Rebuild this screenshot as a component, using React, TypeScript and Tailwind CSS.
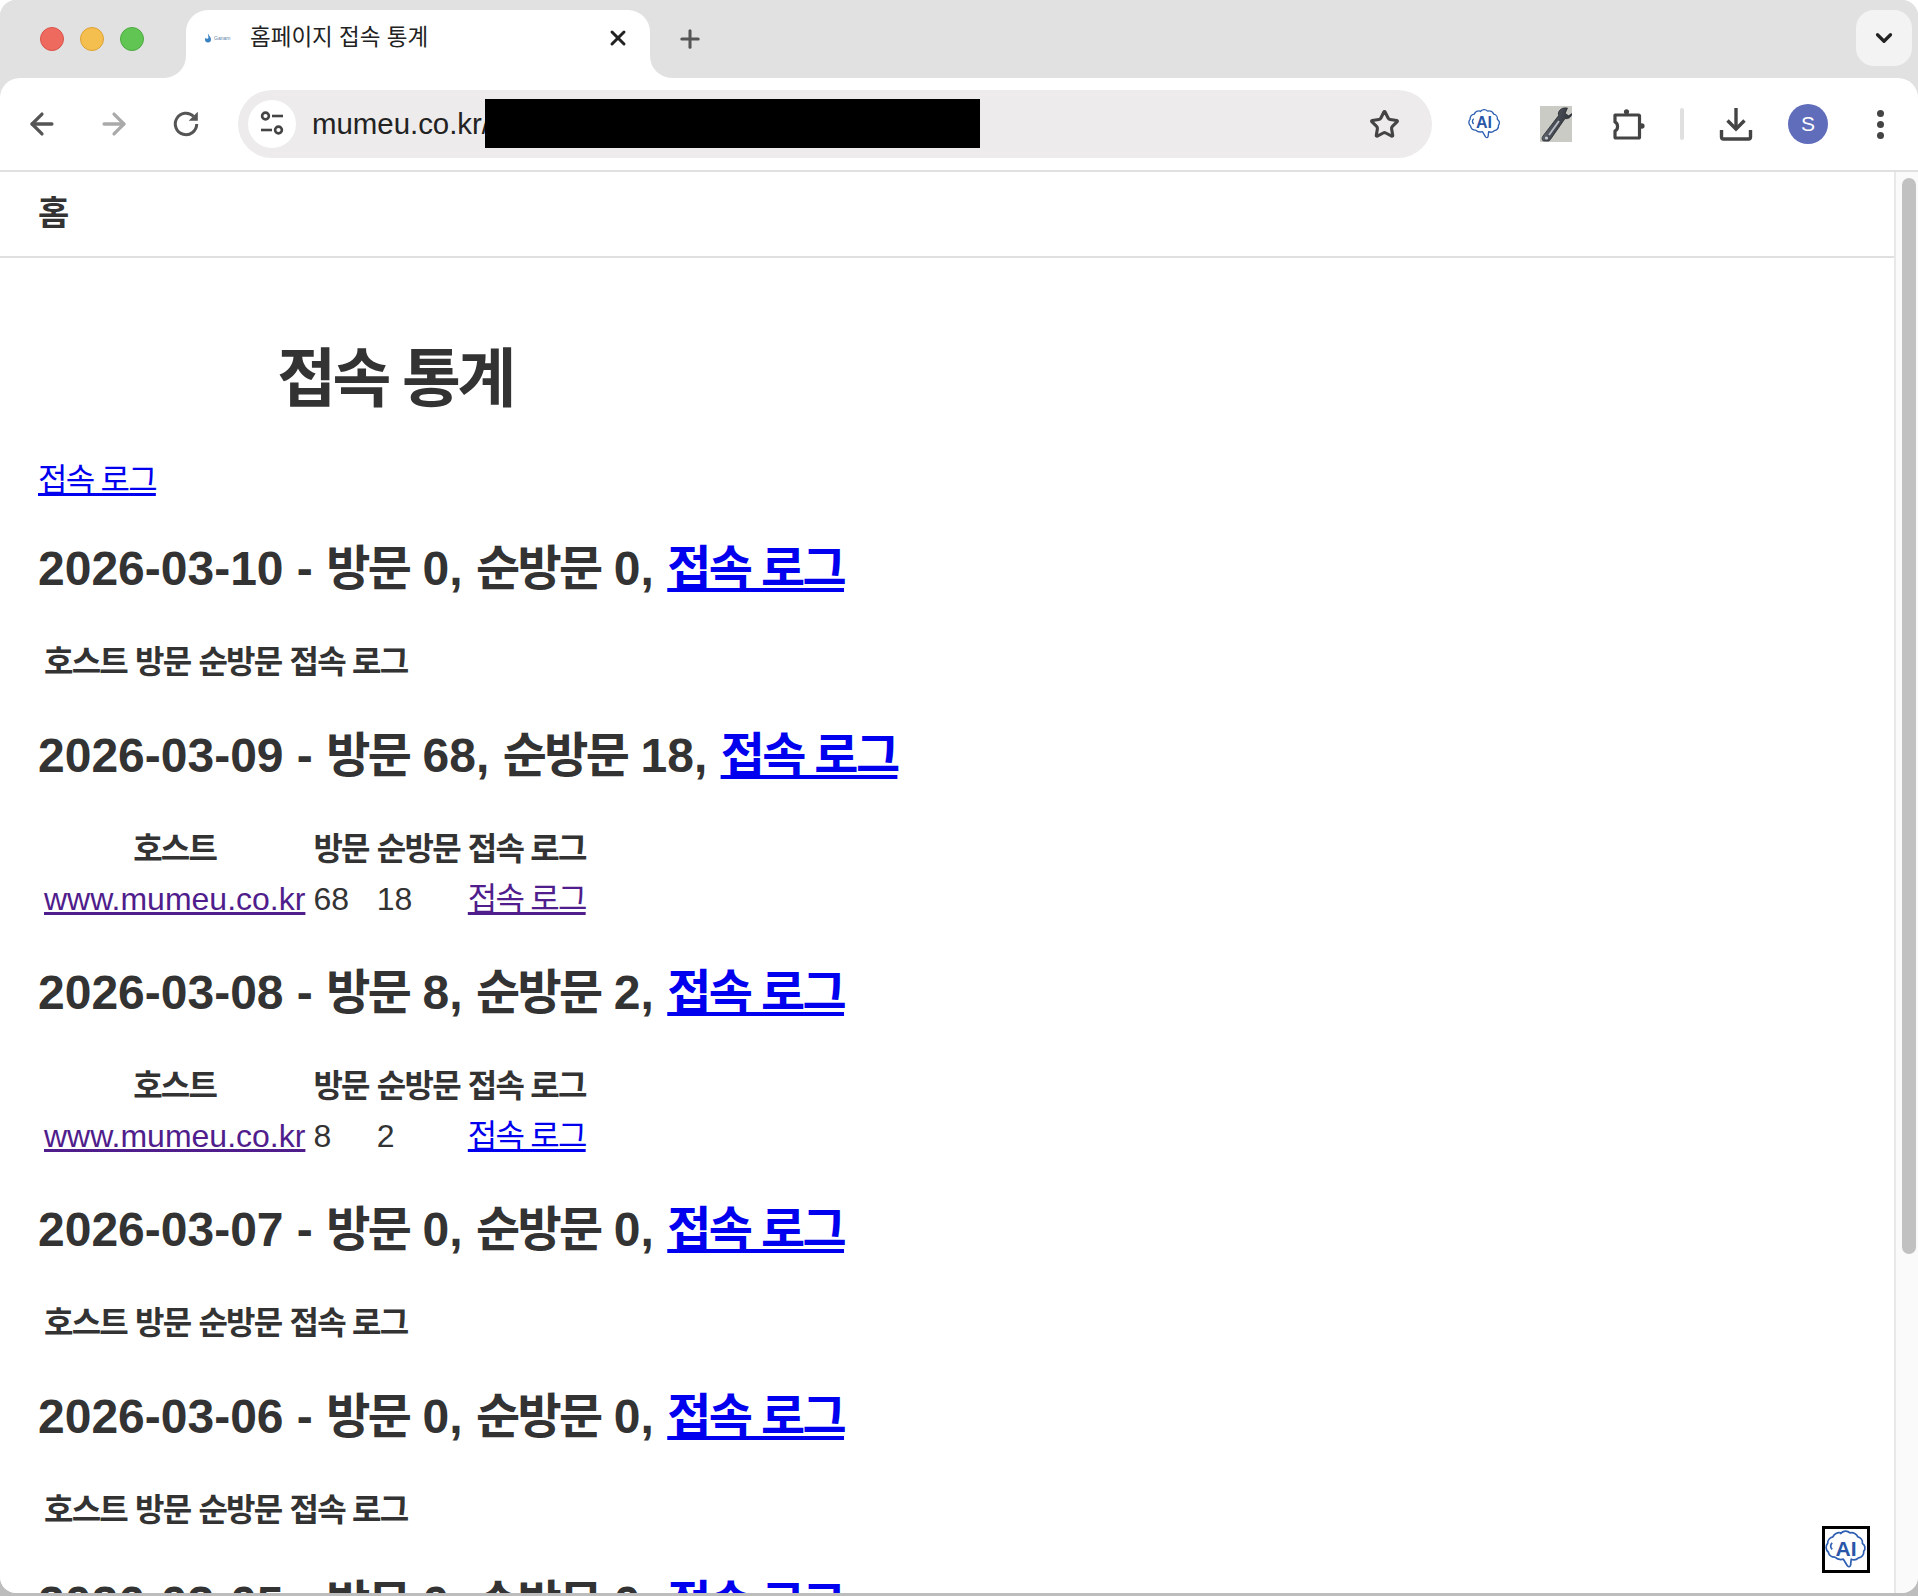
import React from 'react';
import { ArrowLeft, ArrowRight, Star, X, Plus, ChevronDown } from 'lucide-react';

const Ko: React.FC<{ children: React.ReactNode }> = ({ children }) => (
  <span className="tracking-[-0.055em]">{children}</span>
);

const BrainIcon: React.FC<{ size: number; textClass: string }> = ({ size, textClass }) => (
  <div className="relative flex items-center justify-center" style={{ width: size, height: size }}>
    <svg viewBox="0 0 32 32" className="absolute inset-0 w-full h-full" fill="none" stroke="#2f5fb3" strokeWidth="1.3" strokeLinejoin="round">
      <path d="M12 3.5a4.5 4.5 0 0 1 7-.5 5 5 0 0 1 6 3 4.5 4.5 0 0 1 3.5 5 4 4 0 0 1 1 6 4.5 4.5 0 0 1-4 5 5 5 0 0 1-5.5 1l-.5 4.5c-.3 1.5-1.5 1.5-2.5.5l-3-5a7 7 0 0 1-6.5-1.5 5 5 0 0 1-5-4 4.5 4.5 0 0 1-.5-6.5 5 5 0 0 1 4-5 5 5 0 0 1 6-3z" />
      <path d="M5.5 10.5c-1.6 1.4-1.6 3.6 0 5" />
    </svg>
    <span className={`relative font-bold leading-none text-[#2a56a8] -translate-y-[1px] ${textClass}`}>AI</span>
  </div>
);

const TuneIcon = () => (
  <svg width="24" height="28" viewBox="0 0 24 28" fill="none" stroke="#444" strokeWidth="2.6">
    <circle cx="5.5" cy="6" r="3.4" />
    <path d="M12 6h11" />
    <path d="M1 20h11" />
    <circle cx="18.5" cy="20" r="3.4" />
  </svg>
);

const ReloadIcon = () => (
  <svg width="30" height="30" viewBox="0 0 28 28" fill="none" stroke="#555" strokeWidth="2.8">
    <path d="M24 14a10 10 0 1 1-3-7.2" />
    <path d="M25 2.5v8.5h-8.5z" fill="#555" stroke="none" />
  </svg>
);

const PuzzleIcon = () => (
  <svg width="34" height="34" viewBox="0 0 34 34" fill="none" stroke="#444" strokeWidth="3.2" strokeLinejoin="round">
    <path d="M4 8h23.5a1 1 0 0 1 1 1v21a1 1 0 0 1-1 1H5a1 1 0 0 1-1-1v-6c3.4-1.4 3.4-7.6 0-9z" />
    <circle cx="15.5" cy="4.8" r="2.6" fill="#444" stroke="none" />
    <circle cx="30.8" cy="19" r="2.8" fill="#444" stroke="none" />
  </svg>
);

const DownloadIcon = () => (
  <svg width="34" height="34" viewBox="0 0 34 34" fill="none" stroke="#444" strokeWidth="3.4">
    <path d="M17 1v20" />
    <path d="M8.5 13.5l8.5 8.5 8.5-8.5" />
    <path d="M2.5 23v7a2 2 0 0 0 2 2h25a2 2 0 0 0 2-2v-7" />
  </svg>
);

const WrenchIcon = () => (
  <svg width="32" height="36" viewBox="0 0 32 36">
    <defs>
      <linearGradient id="wrenchBody" x1="0" y1="0" x2="1" y2="0.4">
        <stop offset="0" stopColor="#8a8f96" />
        <stop offset="0.5" stopColor="#4a4f57" />
        <stop offset="1" stopColor="#2e3138" />
      </linearGradient>
    </defs>
    <rect width="32" height="36" fill="#cbcbc6" />
    <path d="M24 2c-4 .6-6.4 4-5.4 7.6L3 30c-1.4 2-1 4 .4 5h5.2c.6-.2 1.2-.6 1.6-1.2L25 12.6c3.6.6 6.4-1.6 7-5l-3.4 2.2-3.4-2.4L27.4 2z" fill="url(#wrenchBody)" stroke="#23262c" strokeWidth="0.8" />
    <path d="M19 15L9 29" stroke="#b6bbc2" strokeWidth="2" />
    <circle cx="6.5" cy="32" r="1.6" fill="#c9cdd2" />
  </svg>
);

const Favicon = () => (
  <div className="flex items-center gap-[2px] w-[30px] overflow-hidden">
    <svg width="8" height="10" viewBox="0 0 8 10">
      <path d="M4 0.5C5 3 7 4 7 6.5a3 3 0 0 1-6 0c0-.8.4-1.4.8-1.8C2.2 6 4 6.2 4.4 5 4.7 3.6 3.6 2 4 .5z" fill="#3b82c4" />
    </svg>
    <span className="text-[5px] leading-none text-[#5d7fa8]">Ganam</span>
  </div>
);

const ToolButton: React.FC<{ children: React.ReactNode }> = ({ children }) => (
  <div className="w-[72px] h-[44px] flex items-center justify-center shrink-0">{children}</div>
);

const LINK = 'text-[#0000ee] underline';
const VISITED = 'text-[#4f1d8c] underline';

interface DayStat {
  date: string;
  visits: number;
  uniques: number;
  logVisited?: boolean;
}

const days: DayStat[] = [
  { date: '2026-03-10', visits: 0, uniques: 0 },
  { date: '2026-03-09', visits: 68, uniques: 18, logVisited: true },
  { date: '2026-03-08', visits: 8, uniques: 2 },
  { date: '2026-03-07', visits: 0, uniques: 0 },
  { date: '2026-03-06', visits: 0, uniques: 0 },
  { date: '2026-03-05', visits: 0, uniques: 0 },
];

const thClass = 'p-[2px] h-[46px] font-bold text-center align-middle';
const tdClass = 'p-[2px] h-[46px] text-left align-middle';

const DaySection: React.FC<{ day: DayStat }> = ({ day }) => (
  <section>
    <h2 className="text-[48px] leading-[55px] font-bold my-[39px] whitespace-nowrap">
      {day.date} - <Ko>방문</Ko> {day.visits}, <Ko>순방문</Ko> {day.uniques},{' '}
      <a className={LINK}><Ko>접속 로그</Ko></a>
    </h2>
    <table className="border-separate border-spacing-[4px]">
      <thead>
        <tr>
          <th className={thClass}><Ko>호스트</Ko></th>
          <th className={thClass}><Ko>방문</Ko></th>
          <th className={thClass}><Ko>순방문</Ko></th>
          <th className={thClass}><Ko>접속 로그</Ko></th>
        </tr>
      </thead>
      {day.visits > 0 && (
        <tbody>
          <tr>
            <td className={tdClass}><a className={VISITED}>www.mumeu.co.kr</a></td>
            <td className={tdClass}>{day.visits}</td>
            <td className={tdClass}>{day.uniques}</td>
            <td className={tdClass}>
              <a className={day.logVisited ? VISITED : LINK}><Ko>접속 로그</Ko></a>
            </td>
          </tr>
        </tbody>
      )}
    </table>
  </section>
);

export default function App() {
  return (
    <div className="relative w-[1918px] h-[1596px] overflow-hidden bg-gradient-to-b from-white from-90% to-[#bdbdbd] to-90%">
      <div className="h-[1593px] overflow-hidden rounded-[16px] bg-[#e1e1e1] flex flex-col font-['Liberation_Sans','Noto_Sans_CJK_KR',sans-serif] text-[#333]">
        {/* tab strip */}
        <div className="h-[78px] bg-[#e1e1e1] flex shrink-0">
          <div className="w-[186px] flex items-center gap-[16px] pl-[40px] shrink-0">
            <div className="w-[24px] h-[24px] rounded-full bg-[#ee6a5f] border border-[#d9534a]" />
            <div className="w-[24px] h-[24px] rounded-full bg-[#f5bf4f] border border-[#dca235]" />
            <div className="w-[24px] h-[24px] rounded-full bg-[#61c554] border border-[#4cab40]" />
          </div>
          <div className="relative mt-[10px] w-[464px] h-[68px] bg-white rounded-t-[22px] flex items-center pl-[18px] pr-[20px] pb-[12px] shrink-0">
            {/* concave corners of the active tab */}
            <div className="absolute left-[-22px] bottom-0 w-[22px] h-[22px] bg-white">
              <div className="w-full h-full bg-[#e1e1e1] rounded-br-[22px]" />
            </div>
            <div className="absolute right-[-22px] bottom-0 w-[22px] h-[22px] bg-white">
              <div className="w-full h-full bg-[#e1e1e1] rounded-bl-[22px]" />
            </div>
            <Favicon />
            <span className="ml-[16px] text-[22.5px] text-[#222]">홈페이지 접속 통계</span>
            <X size={24} strokeWidth={3} className="ml-auto text-[#222]" />
          </div>
          <div className="ml-[26px] h-full flex items-center">
            <Plus size={28} strokeWidth={2.6} className="text-[#555]" />
          </div>
          <div className="ml-auto mr-[6px] mt-[10px] w-[56px] h-[56px] rounded-[18px] bg-[#f3f3f3] flex items-center justify-center">
            <ChevronDown size={26} strokeWidth={3} className="text-[#222]" />
          </div>
        </div>

        {/* toolbar */}
        <div className="h-[94px] bg-white border-b-2 border-[#e0e0e0] flex items-center pl-[6px] shrink-0 rounded-t-[20px] relative">
          <ToolButton><ArrowLeft size={34} strokeWidth={2.3} className="text-[#555]" /></ToolButton>
          <ToolButton><ArrowRight size={34} strokeWidth={2.3} className="text-[#aaa]" /></ToolButton>
          <ToolButton><ReloadIcon /></ToolButton>
          <div className="ml-[16px] w-[1194px] h-[68px] rounded-full bg-[#edebec] flex items-center pl-[10px] pr-[32px] shrink-0">
            <div className="w-[48px] h-[48px] rounded-full bg-white flex items-center justify-center shrink-0">
              <TuneIcon />
            </div>
            <span className="ml-[16px] w-[173px] text-[29.4px] text-[#222] whitespace-nowrap shrink-0">mumeu.co.kr/</span>
            <div className="relative w-[495px] h-[49px] bg-black shrink-0 -translate-y-[1px]" />
            <Star size={31} strokeWidth={2.4} className="ml-auto text-[#444]" />
          </div>
          <div className="ml-[16px] flex items-center">
            <ToolButton><BrainIcon size={33} textClass="text-[16px]" /></ToolButton>
            <ToolButton><WrenchIcon /></ToolButton>
            <ToolButton><PuzzleIcon /></ToolButton>
            <div className="w-[36px] flex justify-center shrink-0">
              <div className="w-[4px] h-[32px] rounded-full bg-[#e0e0e0]" />
            </div>
            <ToolButton><DownloadIcon /></ToolButton>
            <ToolButton>
              <div className="w-[40px] h-[40px] rounded-full bg-[#5f6dbb] text-white text-[21px] flex items-center justify-center">S</div>
            </ToolButton>
            <ToolButton>
              <div className="flex flex-col gap-[4px]">
                <div className="w-[7px] h-[7px] rounded-full bg-[#444]" />
                <div className="w-[7px] h-[7px] rounded-full bg-[#444]" />
                <div className="w-[7px] h-[7px] rounded-full bg-[#444]" />
              </div>
            </ToolButton>
          </div>
        </div>

        {/* page */}
        <div className="flex-1 flex min-h-0">
          <main className="flex-1 min-w-0 overflow-hidden bg-white text-[32px] leading-[37px]">
            <div className="h-[86px] border-b-2 border-[#e0e0e0] pl-[38px] pb-[2px] flex items-center">
              <span className="text-[34px] font-bold text-[#333]">홈</span>
            </div>
            <div className="pl-[38px] pt-[85px]">
              <h1 className="w-[714px] text-center text-[64px] leading-[72px] font-bold"><Ko>접속 통계</Ko></h1>
              <p className="mt-[47px] mb-[42px]">
                <a className={LINK}><Ko>접속 로그</Ko></a>
              </p>
              {days.map((day) => (
                <DaySection key={day.date} day={day} />
              ))}
            </div>
          </main>
          <aside className="w-[24px] shrink-0 border-l-2 border-[#e8e8e8] bg-[#fafafa] pl-[6px] pt-[6px]">
            <div className="w-[14px] h-[1076px] rounded-full bg-[#c1c1c1]" />
          </aside>
        </div>
      </div>

      {/* floating AI button */}
      <div className="absolute left-[1822px] top-[1526px] w-[48px] h-[47px] border-[3px] border-black bg-white flex items-center justify-center font-['Liberation_Sans',sans-serif]">
        <BrainIcon size={42} textClass="text-[21px]" />
      </div>
    </div>
  );
}
